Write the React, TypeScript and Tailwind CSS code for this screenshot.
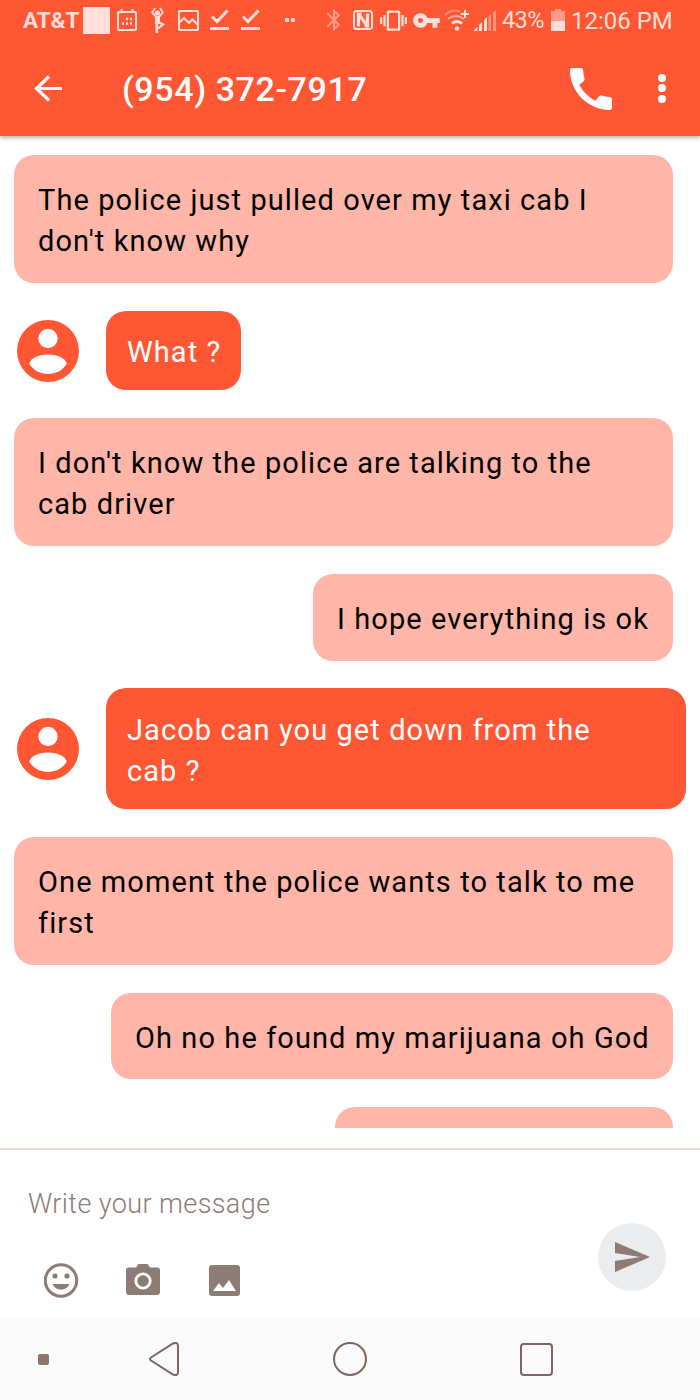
import { MdBluetooth, MdVibration, MdVpnKey, MdCall } from 'react-icons/md';

type Message = { text: string; kind: 'reply' | 'wide' | 'sent'; width?: string };

const messages: Message[] = [
  { kind: 'wide', text: 'The police just pulled over my taxi cab I\ndon\'t know why' },
  { kind: 'reply', text: 'What ?' },
  { kind: 'wide', text: 'I don\'t know the police are talking to the\ncab driver' },
  { kind: 'sent', text: 'I hope everything is ok', width: 'w-[360px]' },
  { kind: 'reply', text: 'Jacob can you get down from the\ncab ?', width: 'w-[580px]' },
  { kind: 'wide', text: 'One moment the police wants to talk to me\nfirst' },
  { kind: 'sent', text: 'Oh no he found my marijuana oh God', width: 'w-[562px]' },
  { kind: 'sent', text: '', width: 'w-[338px]' },
];

function StatusBar() {
  return (
    <div className="flex h-[42px] items-center pl-[23px] text-[22.5px] text-[#ffdfd8]">
      <span className="w-[60px] font-bold">AT&amp;T</span>
      <span className="relative top-[-1px] size-[27px] bg-[#ffdfd8]" />
      <svg className="relative top-[-1px] ml-[7px]" width="20" height="22" viewBox="0 0 20 22" fill="none" stroke="currentColor" strokeWidth="2">
        <rect x="1" y="3" width="18" height="18" rx="1" />
        <path d="M4.500 0v4M15.500 0v4" />
        <path d="M9 10h2M13 10h2M5 14.500h2M9 14.500h2M13 14.500h2" strokeWidth="2.400" />
      </svg>
      <svg className="relative top-[-1px] ml-[14px]" width="14" height="27" viewBox="0 0 14 27" fill="none" stroke="currentColor" strokeWidth="1.800">
        <circle cx="6.500" cy="6" r="2.600" fill="currentColor" stroke="none" />
        <path d="M4 1 1.200 5.500 5 10M9 1l2.800 4.500L8 10" />
        <path d="M6.500 9v8" strokeWidth="5" />
        <path d="M5.800 15v11" strokeWidth="2.600" />
        <path d="m7.500 15 4.500 2.500-5 4" strokeWidth="2.200" />
      </svg>
      <svg className="relative top-[-1px] ml-[13px]" width="21" height="21" viewBox="0 0 21 21" fill="none" stroke="currentColor" strokeWidth="2">
        <rect x="1" y="1" width="19" height="19" rx="1" />
        <path d="m2 12 4-4 5 5 3.500-3.500 5 5" />
      </svg>
      <CheckIcon className="ml-[11px]" />
      <CheckIcon className="ml-[12px]" />
      <span className="relative top-[-1px] ml-[25px] size-[4px] rounded-[1px] bg-current" />
      <span className="relative top-[-1px] ml-[2px] size-[4px] rounded-[1px] bg-current" />
      <MdBluetooth className="relative top-[-1px] ml-[26px] opacity-50" size={26} />
      <svg className="relative top-[-1px] ml-[6px]" width="20" height="20" viewBox="0 0 20 20" fill="none" stroke="currentColor" strokeWidth="2">
        <rect x="1" y="1" width="18" height="18" rx="2.500" />
        <path d="M8.500 4H5.500v12.500M6 4.500l8 11M11.500 16h3V3.500" strokeWidth="3.200" />
      </svg>
      <MdVibration className="relative top-[-1px] ml-[7px]" size={27} />
      <MdVpnKey className="relative top-[-1px] ml-[5px]" size={29} />
      <svg className="relative top-[-1px] ml-[3px] overflow-visible" width="25" height="22" viewBox="0 0 25 22" fill="none" stroke="currentColor" strokeWidth="2">
        <path d="M1 6q8-7 15-3" opacity=".45" />
        <path d="M4 10q8-6 16 0" opacity=".6" />
        <path d="M8 14.500q5-4 10 0" strokeWidth="2.800" />
        <circle cx="13" cy="19.500" r="2.200" fill="currentColor" stroke="none" />
        <path d="M21 1v8M17 5h8" />
      </svg>
      <svg className="relative top-[-1px] ml-[5px]" width="22" height="21" viewBox="0 0 22 21" fill="currentColor">
        <path d="M0 21v-1l3.500-3v4zM5 21v-6l3-3v9zM10 21V10l3-3v14z" />
        <path d="M14.500 21V6l2.500-2v17zM19 21V2l3-2v21z" opacity=".45" />
      </svg>
      <span className="ml-[6px] w-[42px] text-[23.500px] tracking-[-0.6px]">43%</span>
      <svg className="relative top-[-1px] ml-[7px]" width="14" height="22" viewBox="0 0 14 22" fill="currentColor">
        <path d="M4 0h6v2h4v10H0V2h4z" opacity=".5" />
        <path d="M0 12h14v10H0z" />
      </svg>
      <span className="ml-[6px] whitespace-nowrap text-[24px]">12:06 PM</span>
    </div>
  );
}

function CheckIcon({ className }: { className: string }) {
  return (
    <svg className={`relative top-[-1px] ${className}`} width="19" height="22" viewBox="0 0 19 22" fill="none" stroke="currentColor" strokeWidth="3">
      <path d="m2 7.500 5 5L17.500 1.500" />
      <path d="M0 19.500h19" />
    </svg>
  );
}

function Header() {
  return (
    <header className="relative z-10 h-[136px] bg-[#ff5733] shadow-[0_2px_4px_rgba(0,0,0,0.3)]">
      <StatusBar />
      <div className="flex h-[94px] items-center pl-[34px] text-white">
        <svg width="28" height="28" viewBox="0 0 28 28" fill="none" stroke="currentColor" strokeWidth="3.200">
          <path d="M15 1.500 2.500 13.500 15 25.500M3 13.500h25" />
        </svg>
        <h1 className="ml-[60px] w-[247px] whitespace-nowrap text-[34px] font-medium tracking-[0.6px]">(954) 372-7917</h1>
        <MdCall className="ml-[194px]" size={56} />
        <div className="relative top-[-1px] ml-[39px] flex flex-col gap-[2.500px]">
          <span className="size-[8px] rounded-full bg-white" />
          <span className="size-[8px] rounded-full bg-white" />
          <span className="size-[8px] rounded-full bg-white" />
        </div>
      </div>
    </header>
  );
}

function Avatar() {
  return (
    <svg className="shrink-0" width="62" height="62" viewBox="0 0 62 62">
      <circle cx="31" cy="31" r="31" fill="#ff5733" />
      <circle cx="31" cy="18.500" r="9.700" fill="#fff" />
      <path d="M12.200 43.500C16 31.500 46 31.500 49.800 43.500C42 57.500 20 57.500 12.200 43.500z" fill="#fff" />
    </svg>
  );
}

function Bubble({ message }: { message: Message }) {
  if (message.kind === 'reply') {
    return (
      <div className="flex items-center gap-[27px] pl-[17px]">
        <Avatar />
        <p
          className={`whitespace-pre-line rounded-[20px] bg-[#ff5733] pb-[17px] pl-[21px] pt-[21.500px] text-white ${message.width ?? 'w-[134.500px]'}`}
        >
          {message.text}
        </p>
      </div>
    );
  }
  return (
    <p
      className={`ml-auto mr-[27px] min-h-[86.500px] shrink-0 whitespace-pre-line rounded-[20px] bg-[#ffb6a8] pb-[20.500px] pl-[24px] pt-[25px] text-black ${message.width ?? 'w-[659px]'}`}
    >
      {message.text}
    </p>
  );
}

function Composer() {
  return (
    <section className="flex h-[170px] items-start justify-between border-t-2 border-[#eadad7] bg-white pl-[28px] pr-[34px] text-[#8d7b75]">
      <div>
        <p className="mt-[34px] text-[27px] font-light leading-[40px] tracking-[0.4px]">Write your message</p>
        <div className="mt-[39px] flex items-center pl-[16px]">
          <svg width="35" height="35" viewBox="0 0 35 35" fill="currentColor">
            <circle cx="17" cy="17.500" r="15.700" fill="none" stroke="currentColor" strokeWidth="3" />
            <circle cx="11" cy="13" r="2.600" />
            <circle cx="23" cy="13" r="2.600" />
            <path d="M8.500 21h17c-3 7.500-14 7.500-17 0z" />
          </svg>
          <svg className="relative top-[-1px] ml-[47px]" width="34" height="31" viewBox="0 0 34 31" fill="currentColor">
            <path d="M3 3.500h7L12.500 0h9L24 3.500h7a3 3 0 0 1 3 3V28a3 3 0 0 1-3 3H3a3 3 0 0 1-3-3V6.500a3 3 0 0 1 3-3z" />
            <circle cx="17" cy="17" r="7.200" stroke="#fff" strokeWidth="2.800" />
          </svg>
          <svg className="ml-[49px]" width="31" height="31" viewBox="0 0 31 31">
            <rect width="31" height="31" rx="3" fill="currentColor" />
            <path d="m4 26 6-8 4 5 6-8 7 11z" fill="#fff" />
          </svg>
        </div>
      </div>
      <button className="mt-[73px] flex size-[68px] items-center justify-center rounded-full bg-[#ebeced]">
        <svg width="35" height="30" viewBox="0 0 35 30" fill="currentColor">
          <path d="M0 0 35 15 0 30V19L25 15 0 11z" />
        </svg>
      </button>
    </section>
  );
}

function NavBar() {
  return (
    <nav className="flex h-[82px] items-center bg-[#fafafa] pl-[38px] text-[#7f655f]">
      <span className="size-[11px] rounded-[2px] bg-[#8d7570]" />
      <svg className="ml-[100px]" width="31" height="34" viewBox="0 0 31 34" fill="none" stroke="currentColor" strokeWidth="2">
        <path d="M2 15.500 24 1.500q5-2 5 2.500v26q0 4.500-5 2.500L2 18.500q-2-1.500 0-3z" />
      </svg>
      <span className="ml-[153px] size-[34px] rounded-full border-2 border-current" />
      <span className="ml-[153px] size-[33px] rounded-[4px] border-2 border-current" />
    </nav>
  );
}

export default function App() {
  return (
    <main className="flex h-[1400px] w-[700px] flex-col overflow-hidden bg-white font-[Roboto,sans-serif]">
      <Header />
      <div className="flex h-[992px] flex-col gap-[27.700px] overflow-hidden pt-[19px] text-[29px] leading-[41.250px] tracking-[1.080px]">
        {messages.map((message, i) => (
          <Bubble key={i} message={message} />
        ))}
      </div>
      <div className="h-[20px] shrink-0" />
      <Composer />
      <NavBar />
    </main>
  );
}
